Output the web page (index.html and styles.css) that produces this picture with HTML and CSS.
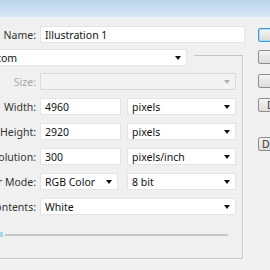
FILE: index.html
```html
<!DOCTYPE html>
<html lang="en">
<head>
    <meta charset="UTF-8">
    <title>New</title>
    <link rel="stylesheet" href="styles.css">
</head>
<body>
    <div class="titlebar"></div>
    <div class="dialog">
        <div class="form">
            <div class="row">
                <span class="label">Name:</span>
                <div class="field fill">Illustration 1</div>
            </div>
            <div class="preset-row">
                <div class="field select preset"><span>Custom</span><i class="arrow"></i></div>
            </div>
            <div class="group">
                <div class="row">
                    <span class="label disabled">Size:</span>
                    <div class="field select fill off"><span></span><i class="arrow"></i></div>
                </div>
                <div class="row">
                    <span class="label">Width:</span>
                    <div class="field num">4960</div>
                    <div class="field select unit"><span>pixels</span><i class="arrow"></i></div>
                </div>
                <div class="row">
                    <span class="label">Height:</span>
                    <div class="field num">2920</div>
                    <div class="field select unit"><span>pixels</span><i class="arrow"></i></div>
                </div>
                <div class="row">
                    <span class="label">Resolution:</span>
                    <div class="field num">300</div>
                    <div class="field select unit"><span>pixels/inch</span><i class="arrow"></i></div>
                </div>
                <div class="row">
                    <span class="label">Color Mode:</span>
                    <div class="field select mode"><span>RGB Color</span><i class="arrow"></i></div>
                    <div class="field select unit"><span>8 bit</span><i class="arrow"></i></div>
                </div>
                <div class="row">
                    <span class="label">Background Contents:</span>
                    <div class="field select fill"><span>White</span><i class="arrow"></i></div>
                </div>
                <div class="advanced">
                    <i class="toggle"></i>
                    <div class="rule"></div>
                </div>
            </div>
        </div>
        <div class="buttons">
            <div class="btn default">OK</div>
            <div class="btn">Cancel</div>
            <div class="btn save">Save Preset...</div>
            <div class="btn delete">Delete Preset...</div>
            <div class="btn device">Device Central...</div>
        </div>
    </div>
</body>
</html>
```

FILE: styles.css
```css
body {
    margin: 0;
    width: 270px;
    height: 270px;
    overflow: hidden;
    background-color: #f0f0f0;
    font-family: 'Noto Sans', sans-serif;
    font-size: 10.5px;
    color: #222;
}
.titlebar {
    height: 17px;
    background: linear-gradient(#bcd5eb, #d7e7f5);
}
.dialog {
    display: flex;
    padding-top: 9px;
}
.form {
    flex: none;
    width: 329px;
    margin-left: -84px;
}
.row {
    display: flex;
    align-items: center;
    height: 17px;
}
.group .row {
    margin-bottom: 8px;
}
.label {
    flex: none;
    width: 120px;
    margin-right: 4px;
    text-align: right;
    white-space: nowrap;
    color: #333;
}
.label.disabled {
    color: #a8a8a8;
}
.field {
    box-sizing: border-box;
    height: 17px;
    padding: 0 4px;
    display: flex;
    align-items: center;
    justify-content: space-between;
    background-color: #fff;
    border: 1px solid #e4e4e4;
    white-space: nowrap;
    color: #111;
}
.fill {
    flex: 1;
}
.num {
    width: 81px;
}
.unit {
    width: 109px;
    margin-left: 6px;
}
.mode {
    width: 78px;
}
.mode + .unit {
    margin-left: 9px;
}
.field.off {
    background-color: #f3f3f3;
    border-color: #dadada;
}
.arrow {
    width: 0;
    height: 0;
    border-left: 3.5px solid transparent;
    border-right: 3.5px solid transparent;
    border-top: 4px solid #111;
    margin-right: 1px;
}
.off .arrow {
    border-top-color: #b0b0b0;
}
.preset-row {
    position: relative;
    display: flex;
    width: 278px;
    margin-top: 6px;
    margin-bottom: -11px;
    background-color: #f0f0f0;
}
.preset {
    width: 213px;
    margin-left: 58px;
}
.group {
    width: 327px;
    box-sizing: border-box;
    border: 1px solid #c4c4c4;
    border-left: none;
    box-shadow: 1px 1px 0 #fbfbfb;
    padding: 17px 6px 21px 0;
}
.advanced {
    display: flex;
    align-items: center;
    height: 5px;
    margin-top: 17px;
}
.toggle {
    width: 3px;
    height: 5px;
    margin-left: 84px;
    background-color: #a9d9e2;
}
.rule {
    width: 223px;
    height: 2px;
    margin-left: 2px;
    background-color: #c6c6c6;
}
.buttons {
    flex: none;
    margin-left: 13px;
    padding-top: 2px;
}
.btn {
    box-sizing: border-box;
    width: 86px;
    height: 14px;
    margin-bottom: 8px;
    padding-left: 4px;
    line-height: 12px;
    white-space: nowrap;
    border: 1px solid #8f8f8f;
    border-radius: 2px;
    background: linear-gradient(#f4f4f4, #dcdcdc);
    color: #333;
}
.btn.default {
    padding-left: 36px;
    border-color: #3d9be0;
    box-shadow: inset 0 0 0 1px #a8dcf6;
}
.btn:nth-child(2) {
    padding-left: 26px;
    margin-bottom: 10px;
}
.btn.save {
    padding-left: 13px;
    margin-bottom: 10px;
}
.btn.delete {
    padding-left: 8px;
    color: #4a3030;
}
.btn.device {
    padding-left: 3px;
    margin-top: 25px;
}
```
